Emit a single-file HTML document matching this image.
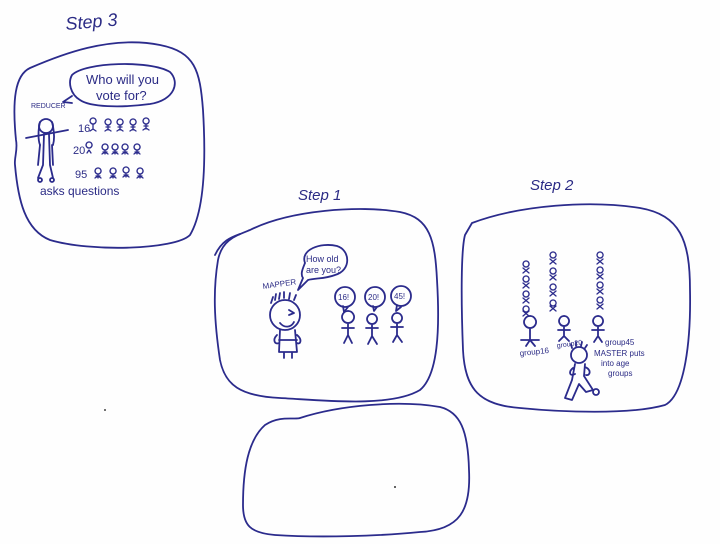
<!DOCTYPE html>
<html><head><meta charset="utf-8"><style>
html,body{margin:0;padding:0;background:#fff;}
svg{display:block;}
text{font-family:"Liberation Sans",sans-serif;fill:#2b2b85;}
</style></head><body>
<svg width="720" height="544" viewBox="0 0 720 544" xmlns="http://www.w3.org/2000/svg">
<rect width="720" height="544" fill="#fefefe"/>
<g fill="none" stroke="#2b2b8c" stroke-width="1.8" stroke-linecap="round" stroke-linejoin="round">
<path d="M30 68 C60 55 110 35 160 45 C195 52 200 70 203 110 C206 160 205 210 190 235 C175 250 90 252 50 240 C25 230 18 200 15 165 C14 158 18 150 16 140 C12 100 15 75 30 68 Z"/>
<path d="M250 230 C290 210 360 205 400 212 C430 218 435 240 437 280 C440 330 438 375 420 390 C390 408 320 400 280 398 C240 396 225 385 220 360 C214 320 213 290 218 260 C222 240 235 236 250 230 Z"/>
<path d="M472 223 C520 205 590 200 640 208 C680 215 690 240 690 290 C691 340 685 395 665 405 C630 415 560 412 520 408 C480 405 465 390 463 350 C461 300 461 250 465 235 Z"/>
<path d="M300 418 C340 405 400 400 440 407 C460 412 468 430 469 470 C471 510 460 530 420 532 C380 536 320 538 275 535 C250 533 243 525 243 505 C243 470 248 440 265 425 C280 415 295 420 300 418 Z"/>
<path d="M215 255 C222 240 232 237 240 234"/>

<path d="M72 75 C85 62 150 60 170 72 C180 82 175 100 150 104 C120 108 90 107 80 100 C70 94 68 82 72 75 Z"/>
<path d="M72 96 L63 102 L72 103"/>
<circle cx="46" cy="126" r="7"/>
<path d="M40 122 C38 130 38 140 40 145 M52 122 C54 130 55 138 53 145"/>
<path d="M26 138 L68 130 M44 134 L43 165 L38 178 M49 134 L50 165 L53 178 M40 145 L38 165 M52 145 L53 165"/>
<circle cx="40" cy="180" r="2"/><circle cx="52" cy="180" r="2"/>
<g stroke-width="1.3">
<path d="M93 118 a3 3 0 1 0 0.1 0 M93 124 l0 5 M90 131 l3 -2 l3 2"/>
<path d="M108 119 a3 3 0 1 0 0.1 0 M108 125 l0 5 M105 131 l3 -2 l3 2 M106 127 l4 0"/>
<path d="M120 119 a3 3 0 1 0 0.1 0 M120 125 l0 5 M117 131 l3 -2 l3 2 M118 127 l4 0"/>
<path d="M133 119 a3 3 0 1 0 0.1 0 M133 125 l0 5 M130 131 l3 -2 l3 2 M131 127 l4 0"/>
<path d="M146 118 a3 3 0 1 0 0.1 0 M146 124 l0 5 M143 130 l3 -2 l3 2 M144 126 l4 0"/>
<path d="M89 142 a3 3 0 1 0 0.1 0 M87 153 l2 -3 l2 3"/>
<path d="M105 144 a3 3 0 1 0 0.1 0 M105 150 l0 4 M102 154 l3 -2 l3 2 M103 152 l4 0"/>
<path d="M115 144 a3 3 0 1 0 0.1 0 M115 150 l0 4 M112 154 l3 -2 l3 2 M113 152 l4 0"/>
<path d="M125 144 a3 3 0 1 0 0.1 0 M125 150 l0 4 M122 154 l3 -2 l3 2 M123 152 l4 0"/>
<path d="M137 144 a3 3 0 1 0 0.1 0 M137 150 l0 4 M134 154 l3 -2 l3 2 M135 152 l4 0"/>
<path d="M98 168 a3 3 0 1 0 0.1 0 M98 174 l0 4 M95 178 l3 -2 l3 2 M96 176 l4 0"/>
<path d="M113 168 a3 3 0 1 0 0.1 0 M113 174 l0 4 M110 178 l3 -2 l3 2 M111 176 l4 0"/>
<path d="M126 167 a3 3 0 1 0 0.1 0 M126 173 l0 4 M123 177 l3 -2 l3 2 M124 175 l4 0"/>
<path d="M140 168 a3 3 0 1 0 0.1 0 M140 174 l0 4 M137 178 l3 -2 l3 2 M138 176 l4 0"/>
</g>

<path d="M305 263 C300 250 320 242 337 246 C350 250 352 270 335 275 C325 279 315 278 308 280 L298 290 L303 278 C300 274 303 268 305 263 Z"/>
<circle cx="285" cy="315" r="15"/>
<path d="M271 303 l2 -6 M275 300 l1 -6 M279 299 l1 -6 M284 298 l0 -6 M289 299 l1 -6 M294 300 l2 -5"/>
<path d="M280 323 C284 328 291 328 294 322 M289 310 l5 3 l-5 2"/>
<path d="M280 330 L279 352 L297 352 L295 330 M279 340 L297 340 M284 352 L284 358 M292 352 L292 358 M277 335 C272 340 275 345 279 343 M297 335 C303 340 300 345 297 343"/>
<circle cx="345" cy="297" r="10"/><path d="M343 306 l1 6 l4 -5"/>
<circle cx="375" cy="297" r="10"/><path d="M373 306 l1 5 l3 -4"/>
<circle cx="401" cy="296" r="10"/><path d="M397 305 l-1 6 l5 -4"/>
<path d="M348 311 a6 6 0 1 0 0.1 0 M348 323 l0 12 M342 328 l12 0 M348 335 l-4 8 M348 335 l4 8"/>
<path d="M372 314 a5 5 0 1 0 0.1 0 M372 324 l0 12 M366 328 l12 0 M372 336 l-4 8 M372 336 l5 8"/>
<path d="M397 313 a5 5 0 1 0 0.1 0 M397 323 l0 12 M391 327 l12 0 M397 335 l-4 7 M397 335 l5 7"/>

<g stroke-width="1.3">
<path d="M526 261 a3 3 0 1 0 .1 0 M523 268 l6 5 M529 268 l-6 5 M526 276 a3 3 0 1 0 .1 0 M523 283 l6 5 M529 283 l-6 5 M526 291 a3 3 0 1 0 .1 0 M523 298 l6 5 M529 298 l-6 5 M526 306 a3 3 0 1 0 .1 0 M523 311 l6 5 M529 311 l-6 5"/>
<path d="M553 252 a3 3 0 1 0 .1 0 M550 259 l6 5 M556 259 l-6 5 M553 268 a3 3 0 1 0 .1 0 M550 275 l6 5 M556 275 l-6 5 M553 284 a3 3 0 1 0 .1 0 M550 291 l6 5 M556 291 l-6 5 M553 300 a3 3 0 1 0 .1 0 M550 306 l6 5 M556 306 l-6 5"/>
<path d="M600 252 a3 3 0 1 0 .1 0 M597 259 l6 5 M603 259 l-6 5 M600 267 a3 3 0 1 0 .1 0 M597 274 l6 5 M603 274 l-6 5 M600 282 a3 3 0 1 0 .1 0 M597 289 l6 5 M603 289 l-6 5 M600 297 a3 3 0 1 0 .1 0 M597 304 l6 5 M603 304 l-6 5"/>
</g>
<path d="M530 316 a6 6 0 1 0 .1 0 M530 328 l0 12 M521 340 l18 0 M530 340 l-4 6 M530 340 l5 6"/>
<path d="M564 316 a5 5 0 1 0 .1 0 M564 326 l0 10 M558 330 l12 0 M564 336 l-5 5 M564 336 l5 5"/>
<path d="M598 316 a5 5 0 1 0 .1 0 M598 326 l0 10 M592 330 l12 0 M598 336 l-4 6 M598 336 l4 6"/>
<circle cx="579" cy="355" r="8"/>
<path d="M572 348 l-1 -4 M576 346 l0 -4 M581 346 l1 -4 M585 348 l2 -3"/>
<path d="M575 364 L572 380 L565 398 L572 400 L579 384 L586 392 L593 390 L584 376 L585 364 M573 368 C568 372 570 377 575 374 M585 367 C592 370 590 376 586 375"/>
<circle cx="596" cy="392" r="3"/>
</g>

<g>
<text x="66" y="30" font-size="18" font-style="italic" transform="rotate(-5 66 30)">Step 3</text>
<text x="86" y="84" font-size="13">Who will you</text>
<text x="96" y="100" font-size="13">vote for?</text>
<text x="31" y="108" font-size="7">REDUCER</text>
<text x="78" y="132" font-size="11">16</text>
<text x="73" y="154" font-size="11">20</text>
<text x="75" y="178" font-size="11">95</text>
<text x="40" y="195" font-size="12">asks questions</text>
<text x="298" y="200" font-size="15" font-style="italic">Step 1</text>
<text x="306" y="262" font-size="9">How old</text>
<text x="306" y="273" font-size="9">are you?</text>
<text x="263" y="289" font-size="8" transform="rotate(-8 263 289)">MAPPER</text>
<text x="338" y="300" font-size="8">16!</text>
<text x="368" y="300" font-size="8">20!</text>
<text x="394" y="299" font-size="8">45!</text>
<text x="530" y="190" font-size="15" font-style="italic">Step 2</text>
<text x="520" y="356" font-size="8" transform="rotate(-6 520 356)">group16</text>
<text x="557" y="348" font-size="7" transform="rotate(-8 557 348)">group20</text>
<text x="605" y="345" font-size="8">group45</text>
<text x="594" y="356" font-size="8">MASTER puts</text>
<text x="601" y="366" font-size="8">into age</text>
<text x="608" y="376" font-size="8">groups</text>
</g>
<circle cx="105" cy="410" r="1" fill="#444"/>
<circle cx="395" cy="487" r="1" fill="#333"/>
</svg>
</body></html>
